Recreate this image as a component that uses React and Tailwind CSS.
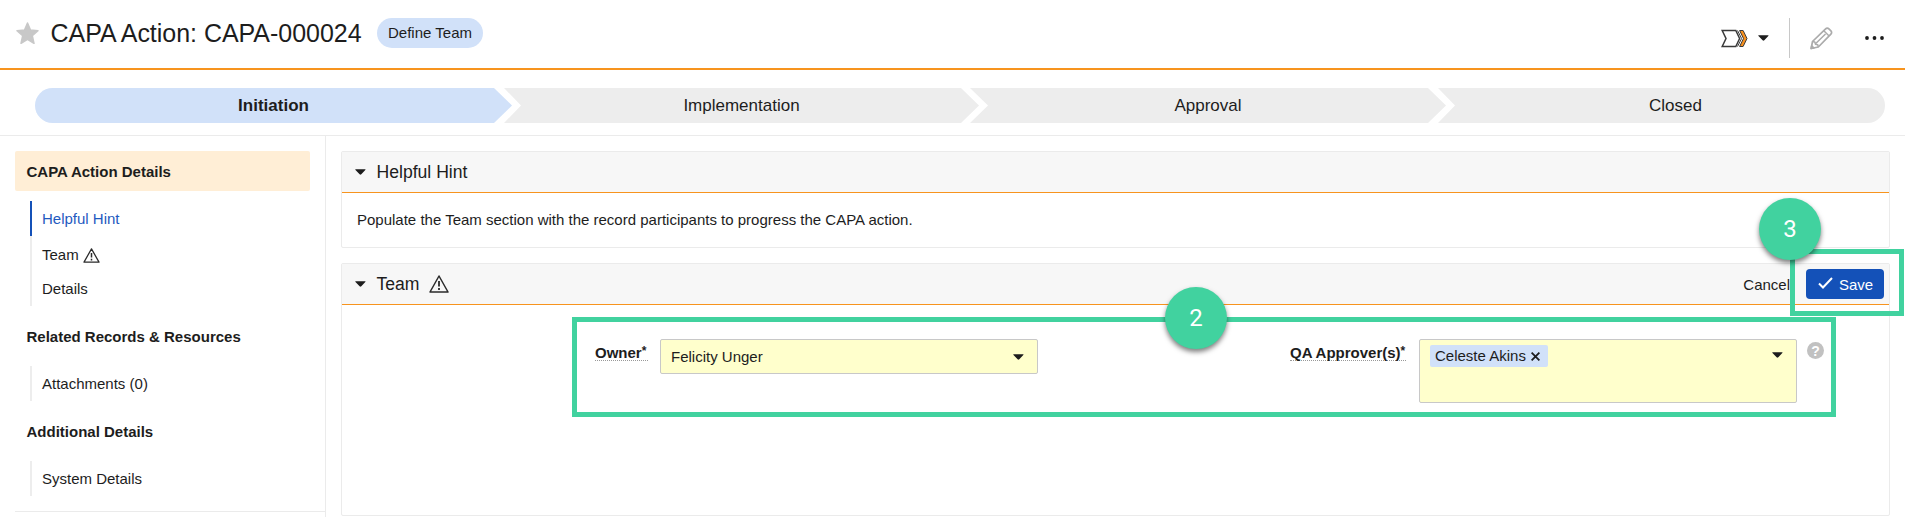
import clsx from 'clsx';

const STAGES = [
  { label: 'Initiation', shape: 'w-[477px] rounded-l-full bg-[#d1e1f9] font-bold [clip-path:polygon(0_0,459px_0,100%_50%,459px_100%,0_100%)]' },
  { label: 'Implementation', shape: '-ml-2 w-[475px] bg-[#ededed] [clip-path:polygon(0_0,457px_0,100%_50%,457px_100%,0_100%,17px_50%)]' },
  { label: 'Approval', shape: '-ml-[9px] w-[476px] bg-[#ededed] [clip-path:polygon(0_0,458px_0,100%_50%,458px_100%,0_100%,18px_50%)]' },
  { label: 'Closed', shape: '-ml-2 w-[447px] rounded-r-full bg-[#ededed] pl-[28px] [clip-path:polygon(0_0,100%_0,100%_100%,0_100%,17px_50%)]' },
];

function Caret({ className }) {
  return (
    <svg className={clsx('h-1.5 w-[11px] shrink-0', className)} viewBox="0 0 11 6" fill="#1d1d1d">
      <path d="M.8.300h9.200c.5 0 .6.400.3.700L6.300 5.200a1.200 1.200 0 0 1-1.700 0L.5 1C.200.700.300.300.8.300z" />
    </svg>
  );
}

function Warning({ className }) {
  return (
    <svg className={clsx('shrink-0', className)} viewBox="0 0 20 18" fill="none" stroke="#2b2b2b" strokeLinejoin="round">
      <path d="M10 1 19 17H1z" strokeWidth="1.500" />
      <path d="M10 6v5.500M10 13v2" strokeWidth="1.800" />
    </svg>
  );
}

function Panel({ title, warning, actions, className, children }) {
  return (
    <section className={clsx('w-[1549px] rounded-[2px] border border-[#ebebeb]', className)}>
      <header className="flex h-[41px] items-center border-b border-[#f7941e] bg-[#f7f7f7] pr-[5px] pl-[13px]">
        <Caret />
        <h2 className="ml-[10.5px] text-[17.6px]">{title}</h2>
        {warning && <Warning className="ml-[9px] h-[18px] w-5" />}
        {actions}
      </header>
      {children}
    </section>
  );
}

function NavHeading({ active, className, children }) {
  return (
    <h3 className={clsx('flex h-10 w-[295px] items-center rounded-[2px] pl-[11.5px] font-bold', active ? 'bg-[#ffeed6] pt-0.5' : 'pt-px', className)}>
      {children}
    </h3>
  );
}

function NavItem({ active, className, children }) {
  return (
    <li className={clsx('flex h-[35px] items-center border-l-2 pl-2.5', active ? 'border-[#1451b8] text-[#1f5ac0]' : 'border-[#ededed]', className || 'pt-px')}>
      {children}
    </li>
  );
}

function Label({ className, children }) {
  return (
    <span className={clsx('h-[18px] border-b border-dotted border-[#999] text-[15px] leading-[19px] font-bold whitespace-nowrap', className)}>
      {children}
      <sup className="top-[-3px] text-[12px]">*</sup>
    </span>
  );
}

function Step({ className, children }) {
  return (
    <div className={clsx('absolute flex size-[62px] items-center justify-center rounded-full bg-[#41d29f] font-[Roboto] text-2xl text-white shadow-[0_3px_5px_rgba(0,0,0,0.5)]', className)}>
      {children}
    </div>
  );
}

export default function App() {
  return (
    <div className="relative h-[517px] w-[1915px] overflow-hidden bg-white font-['Liberation_Sans',Arial,sans-serif] text-[15px] text-[#1d1d1d]">
      {/* Record header */}
      <header className="flex h-[70px] w-[1905px] border-b-2 border-[#f7941e]">
        <svg className="mt-[22px] ml-4 size-[23px]" viewBox="0 0 23 23" fill="#c8c8c8" stroke="#c8c8c8" strokeWidth="1.500" strokeLinejoin="round">
          <path d="M11.500 1 14.500 8 22 8.700 16.300 13.700 18 21.300 11.500 17.300 5 21.300 6.700 13.700 1 8.700 8.500 8z" />
        </svg>
        <h1 className="mt-[15px] ml-[11.5px] w-[326.5px] text-[25px] leading-9 tracking-[-0.03px] whitespace-nowrap">CAPA Action: CAPA-000024</h1>
        <span className="mt-[18px] flex h-[30px] w-[106px] items-center justify-center rounded-full bg-[#d1e1f9]">Define Team</span>

        <div className="mt-[18px] ml-auto flex h-10 items-center">
          <svg className="h-[19px] w-[27px]" viewBox="0 0 27 19" fill="none" stroke="#3a3a3a">
            <path d="M1.200 1.500h13.600l3.800 8-3.800 8H1.200l3.800-8z" strokeWidth="1.500" />
            <path d="M16.500 1.500 20.600 9.500 16.500 17.500" strokeWidth="1" />
            <path d="M18.600 1.500h3.500l3.900 8-3.900 8h-3.500l3.900-8z" fill="#f7901e" strokeWidth="1" />
          </svg>
          <Caret className="ml-2.5" />
          <div className="ml-5 h-10 w-px bg-[#c8c8c8]" />
          <svg className="ml-5 size-[23px]" viewBox="0 0 23 23" fill="none" stroke="#ababab" strokeWidth="1.700" strokeLinejoin="round">
            <path d="M1.200 21.500l1.300-7L15.600 1.900a2.300 2.300 0 0 1 3.300 0l2 2a2.300 2.300 0 0 1 0 3.300L8.300 20z" />
            <path d="M13.800 3.700l5.300 5.300M2.500 14.500l2.300.5.700 2.300 2.300.5.500 2.200M15.500 7 6 16.200" strokeWidth="1.500" />
            <path d="M1.200 21.500l.5-2.700 2.200 2.200z" fill="#ababab" />
          </svg>
          <svg className="mr-[21px] ml-8 h-1 w-[19px]" viewBox="0 0 19 4" fill="#1d1d1d">
            <circle cx="2" cy="2" r="1.900" />
            <circle cx="9.500" cy="2" r="1.900" />
            <circle cx="17" cy="2" r="1.900" />
          </svg>
        </div>
      </header>

      {/* Lifecycle stages */}
      <div className="flex h-[66px] w-[1905px] border-b border-[#ebebeb] pt-[18px] pl-[35px] text-[17px]">
        {STAGES.map((stage) => (
          <div key={stage.label} className={clsx('flex h-[35px] shrink-0 items-center justify-center', stage.shape)}>
            {stage.label}
          </div>
        ))}
      </div>

      <div className="flex">
        <nav className="h-[381px] w-[326px] shrink-0 border-r border-[#ebebeb] pt-[15px] pl-[15px]">
          <NavHeading active>CAPA Action Details</NavHeading>
          <ul className="mt-2.5 ml-[15px]">
            <NavItem active>Helpful Hint</NavItem>
            <NavItem className="pt-1">
              Team
              <Warning className="ml-[4px] h-[15px] w-[17px]" />
            </NavItem>
            <NavItem>Details</NavItem>
          </ul>
          <NavHeading className="mt-[11px]">Related Records &amp; Resources</NavHeading>
          <ul className="mt-[9px] ml-[15px]">
            <NavItem>Attachments (0)</NavItem>
          </ul>
          <NavHeading className="mt-[11px]">Additional Details</NavHeading>
          <ul className="mt-[9px] ml-[15px]">
            <NavItem>System Details</NavItem>
          </ul>
          <div className="mt-[15px] h-px bg-[#ebebeb]" />
        </nav>

        <main className="pt-[15px] pl-[15px]">
          <Panel title="Helpful Hint" className="h-[97px]">
            <p className="mt-4 pl-[15px]">Populate the Team section with the record participants to progress the CAPA action.</p>
          </Panel>

          <Panel
            title="Team"
            warning
            className="mt-[15px] h-[253px]"
            actions={
              <div className="ml-auto flex items-center">
                <button className="mr-4 pt-0.5 text-[15px]">Cancel</button>
                <button className="flex h-[30px] w-[78px] items-center rounded-[4px] bg-[#1451b8] pt-[3px] pl-3 text-white">
                  <svg className="mr-1.5 -mt-1.5 h-3 w-[15px]" viewBox="0 0 15 12" fill="none" stroke="#fff" strokeWidth="2">
                    <path d="M1 6.500 5 10.500 14 1" />
                  </svg>
                  Save
                </button>
              </div>
            }
          >
            <div className="flex items-start pt-[34px] pl-[253px]">
              <Label className="mt-[4px] w-[53px]">Owner</Label>
              <div className="ml-3 flex h-[35px] w-[378px] items-center rounded-[2px] border border-[#c8c8c8] bg-[#ffffcc] pr-[13px] pl-2.5">
                <span className="pt-0.5">Felicity Unger</span>
                <Caret className="ml-auto" />
              </div>
              <Label className="mt-[4px] ml-[252px] w-[116px]">QA Approver(s)</Label>
              <div className="ml-[13px] flex h-[64px] w-[378px] items-start rounded-[2px] border border-[#c8c8c8] bg-[#ffffcc] pt-[5px] pr-[13px] pl-2.5">
                <span className="flex h-[22px] w-[118px] items-center rounded-[2px] bg-[#d1e1f9] pl-[5px] whitespace-nowrap">
                  Celeste Akins
                  <svg className="mt-px ml-[5px] size-[9px]" viewBox="0 0 9 9" stroke="#1d1d1d" strokeWidth="1.800">
                    <path d="M.6.6l7.800 7.800M8.400.6.600 8.400" />
                  </svg>
                </span>
                <Caret className="mt-[7px] ml-auto" />
              </div>
              <span className="mt-[3px] ml-2.5 flex size-[17px] items-center justify-center rounded-full bg-[#c1c1c1] text-[14px] leading-none font-bold text-white">?</span>
            </div>
          </Panel>
        </main>
      </div>

      {/* Walkthrough callouts */}
      <div className="absolute top-[317px] left-[572px] h-[100px] w-[1264px] border-5 border-[#41d29f]" />
      <div className="absolute top-[249px] left-[1790px] h-[67px] w-[114px] border-5 border-[#41d29f]" />
      <Step className="top-[287px] left-[1165px]">2</Step>
      <Step className="top-[198px] left-[1759px]">3</Step>
    </div>
  );
}
